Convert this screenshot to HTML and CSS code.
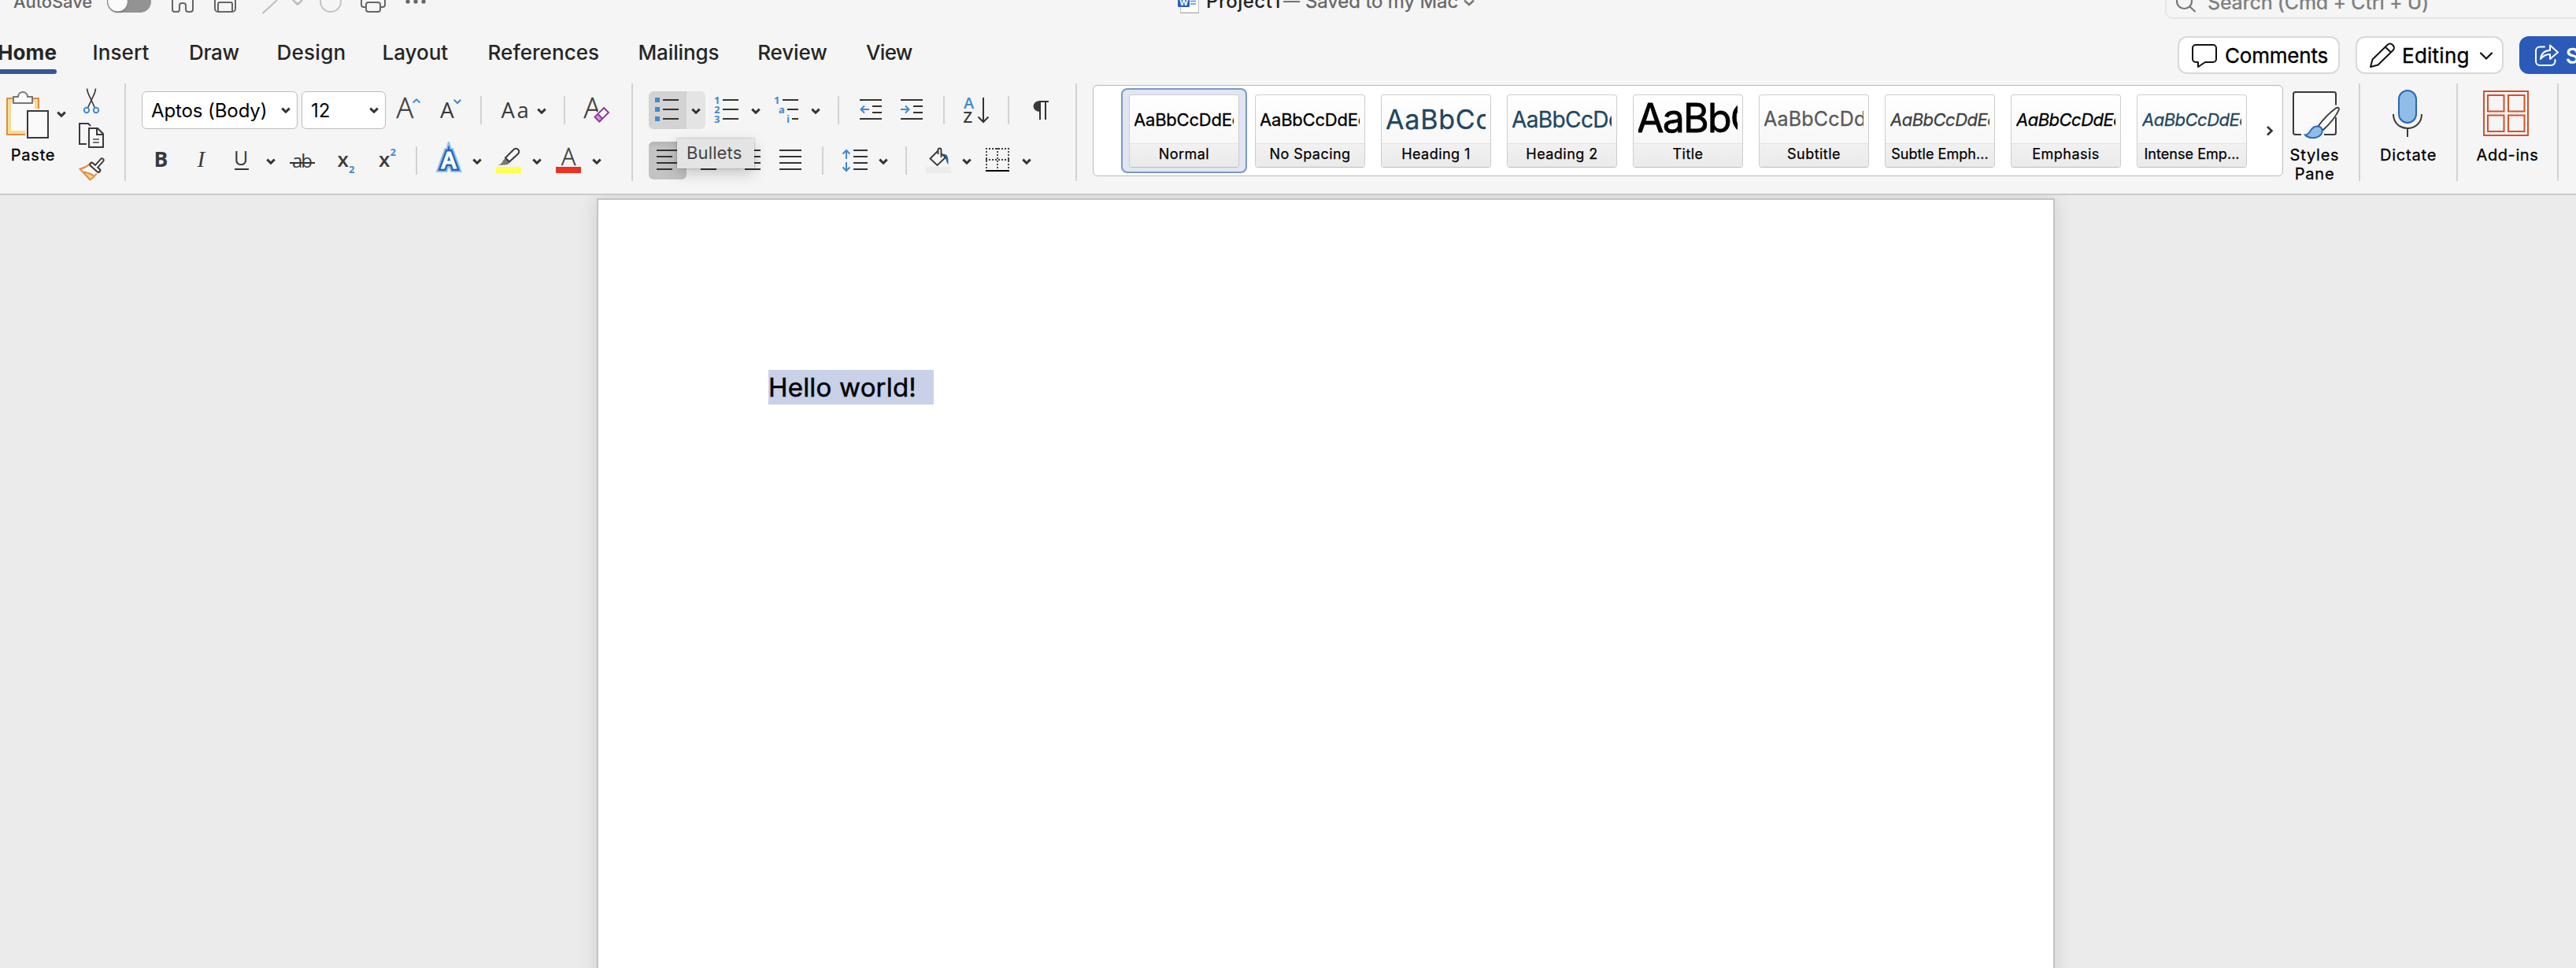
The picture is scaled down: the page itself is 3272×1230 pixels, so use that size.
FILE: index.html
```html
<!DOCTYPE html>
<html lang="en">
<head>
<meta charset="utf-8">
<title>Project1</title>
<link rel="stylesheet" href="styles.css">
</head>
<body>
<svg class="defs" width="0" height="0">
  <symbol id="chev" viewBox="0 0 12 8" width="12" height="8"><path d="M1.300 1.600 6 6.200 10.700 1.600" fill="none" stroke="#333" stroke-width="3"/></symbol>
</svg>

<header class="titlebar">
  <span class="autosave">AutoSave</span>
  <svg class="quick" width="430" height="24" viewBox="120 0 430 24" fill="none" stroke="#666" stroke-width="2">
    <rect x="136" y="-12" width="56" height="28" rx="14" fill="#939393" stroke="none"/>
    <circle cx="149.500" cy="4" r="13" fill="#0002" stroke="none"/>
    <circle cx="149.500" cy="2" r="13" fill="#fbfbfb" stroke="#777" stroke-width="1"/>
    <path d="M219-4V12a3 3 0 0 0 3 3h3a3 3 0 0 0 3-3V7a3 3 0 0 1 3-3h2a3 3 0 0 1 3 3v5a3 3 0 0 0 3 3h3a3 3 0 0 0 3-3V-4"/>
    <path d="M273-4V11a4 4 0 0 0 4 4h18a4 4 0 0 0 4-4V-4M277 15V5a2 2 0 0 1 2-2h14a2 2 0 0 1 2 2v10"/>
    <path d="M333.500 17 352 0" stroke="#bdbdbd"/>
    <path d="M372 0 378 5.500 384 0" stroke="#bdbdbd" stroke-width="2.500"/>
    <circle cx="420" cy="2" r="13" stroke="#c4c4c4"/>
    <path d="M465 9h-3a3 3 0 0 1-3-3V-4M483 9h3a3 3 0 0 0 3-3V-4"/><rect x="465" y="3" width="18" height="12" rx="3"/>
    <g fill="#666" stroke="none"><circle cx="518" cy="2" r="2.600"/><circle cx="528" cy="2" r="2.600"/><circle cx="538" cy="2" r="2.600"/></g>
  </svg>
  <svg class="doc-icon" width="32" height="20" viewBox="1492 0 32 20">
    <path d="M1499.500-4H1522.500V16H1499.500Z" fill="#fff" stroke="#c6c6c6"/><path d="M1499 16.500H1523" stroke="#aaa"/>
    <path d="M1512 1.500h7M1512 5h7" stroke="#4a8ae0" stroke-width="1.500"/>
    <rect x="1496" y="-8" width="15" height="17" rx="1.500" fill="#2c5cbc"/>
    <text x="1498" y="7" font-family="Inter" font-weight="700" font-size="11" fill="#fff">W</text>
  </svg>
  <span class="doc-name">Project1</span><span class="doc-dash">—</span><span class="doc-state">Saved to my Mac</span>
  <svg class="state-chev" width="20" height="12" viewBox="1857 0 20 12"><path d="M1860 .5 1866 6 1872 .5" fill="none" stroke="#777" stroke-width="2.500"/></svg>
  <div class="search">
    <svg width="52" height="24" viewBox="2752 0 52 24" fill="none" stroke="#777" stroke-width="2.200"><circle cx="2774.500" cy="1.500" r="9.500"/><path d="M2781 8 2788.500 15"/></svg>
    <span>Search (Cmd + Ctrl + U)</span>
  </div>
</header>

<nav class="tabs">
  <a class="tab home">Home</a><a class="tab insert">Insert</a><a class="tab draw">Draw</a><a class="tab design">Design</a><a class="tab layout">Layout</a><a class="tab references">References</a><a class="tab mailings">Mailings</a><a class="tab review">Review</a><a class="tab view">View</a>
  <div class="actions">
    <div class="action comments">
      <svg width="58" height="44" viewBox="2768 48 58 44"><path d="M2789 57h22a4 4 0 0 1 4 4v14a4 4 0 0 1-4 4h-10l-9 6v-6h-3a4 4 0 0 1-4-4V61a4 4 0 0 1 4-4Z" fill="none" stroke="#111" stroke-width="2" stroke-linejoin="round"/></svg>
      <span>Comments</span>
    </div>
    <div class="action editing">
      <svg width="57" height="44" viewBox="2994 48 57 44"><path d="M3011 85l2.500-9.500 19-18.500a4.500 4.500 0 0 1 6.500 0l.5.500a4.500 4.500 0 0 1 0 6.500l-19 18.500ZM3030 60l7.500 7" fill="none" stroke="#111" stroke-width="2" stroke-linejoin="round"/></svg>
      <span>Editing</span>
      <svg width="40" height="44" viewBox="3138 48 40 44"><path d="M3151 67.500 3158 74.500 3165 67.500" fill="none" stroke="#111" stroke-width="2.200" stroke-linecap="round"/></svg>
    </div>
    <div class="action share">
      <svg width="59" height="48" viewBox="3200 46 59 48"><path d="M3232 59.500h-6a5 5 0 0 0-5 5V78a5 5 0 0 0 5 5h14.500a5 5 0 0 0 5-5v-2M3227 75c1-7 5-11 12-11v-6.500l10 9-10 8.500v-6c-6 0-9 2-12 6Z" fill="none" stroke="#fff" stroke-width="2" stroke-linejoin="round" stroke-linecap="round"/></svg>
      <span>Share</span>
    </div>
  </div>
</nav>

<section class="ribbon">
  <div class="tool paste">
    <svg width="90" height="78" viewBox="0 106 90 78">
      <path d="M9 125H49V171H9Z" fill="#fafafa" stroke="#e08b40" stroke-width="2"/><path d="M12 128H46V168H12Z" fill="none" stroke="#f5dc94" stroke-width="4"/>
      <path d="M17 131V123h6c0-8 12-8 12 0h6v8Z" fill="#fafafa" stroke="#797673" stroke-width="2"/>
      <rect x="32" y="138" width="32" height="40" fill="#f5f5f5"/><rect x="35" y="141" width="26" height="34" fill="#fafafa" stroke="#3a3a3a" stroke-width="2"/>
      <use href="#chev" x="72" y="141"/>
    </svg>
    <span>Paste</span>
  </div>
  <div class="clipboard">
    <svg width="68" height="124" viewBox="90 106 68 124" fill="none" stroke="#3a3a3a" stroke-width="2">
      <path d="M110.500 112.500Q111 117 113 121L120.500 137M121.500 112.500Q121 117 119 121L111.500 137" stroke-width="1.700"/>
      <circle cx="110" cy="140" r="3.200" stroke="#3f8ad0"/><circle cx="122" cy="140" r="3.200" stroke="#3f8ad0"/>
      <path d="M110 183h-9v-26h11l3 3"/><path d="M113 163h11l7 7v17h-18ZM123 163v8h8" fill="#fafafa"/><path d="M118 177h8M118 181h8" stroke="#797673"/>
      <path d="M101.500 215Q109 213 114 208.500L125.500 219.500Q121 225 115 229Z" fill="#fafafa" stroke="none"/>
      <path d="M105 218Q112 220 119.500 224L114.500 228.500Z" fill="#f5dc94" stroke="none"/>
      <path d="M114 208.500Q109 213 101.700 214.800L114.500 228.500Q119 225.500 123 220.500M105 218.500Q112 219 120 223.500" stroke="#e08b40"/>
      <path d="M122 212 129.500 203.500" stroke-width="6" stroke-linecap="round"/><path d="M116.500 209 125 216.500" stroke-width="6.500" stroke-linecap="round"/>
      <path d="M122 212 129.500 203.500M116.500 209 125 216.500" stroke="#fafafa" stroke-width="2.400" stroke-linecap="round"/>
    </svg>
  </div>
  <i class="rule"></i>

  <div class="group font">
    <div class="row">
      <div class="combo face"><span>Aptos (Body)</span><svg width="12" height="8"><use href="#chev"/></svg></div>
      <div class="combo size"><span>12</span><svg width="12" height="8"><use href="#chev"/></svg></div>
      <svg class="glyph" width="56" height="48" viewBox="490 116 56 48"><text x="503.500" y="150" font-size="36" class="mid">A</text><path class="blue" d="M524.700 130.500 529 126.300 533.300 130.500"/></svg>
      <svg class="glyph" width="64" height="48" viewBox="546 116 64 48"><text x="559" y="150" font-size="28" class="reg">A</text><path class="blue" d="M576.700 126.700 581 131 585.300 126.700"/></svg>
      <i class="sep"></i>
      <svg class="glyph" width="104" height="48" viewBox="612 116 104 48"><text x="636.500" y="150" font-size="27.500" class="reg" letter-spacing="2.500">Aa</text><use href="#chev" x="682" y="137"/></svg>
      <i class="sep"></i>
      <svg class="glyph" width="84" height="48" viewBox="718 116 84 48"><text x="741.500" y="150" font-size="36" class="mid">A</text><path d="M767 134 777 143 761 159 752 149Z" fill="#f5f5f5"/><path d="M756 149 759.500 145.500 765.500 151.500 761.500 155Z" fill="#cf9ad4"/><path d="M767 137 773 143 761.300 154.700 755.500 148.700ZM759.500 145 765.500 151" fill="none" stroke="#8f359c" stroke-width="1.900"/></svg>
    </div>
    <div class="row">
      <svg class="glyph" width="52" height="48" viewBox="180 180 52 48"><text x="195.500" y="212" font-size="26.500" class="bold">B</text></svg>
      <svg class="glyph" width="52" height="48" viewBox="232 180 52 48"><text x="250.500" y="212" font-size="29" class="serif">I</text></svg>
      <svg class="glyph" width="76" height="48" viewBox="284 180 76 48"><text x="297" y="210" font-size="25" class="reg">U</text><path d="M298 215h18" stroke="#333" stroke-width="2"/><use href="#chev" x="338" y="201"/></svg>
      <svg class="glyph" width="52" height="48" viewBox="360 180 52 48"><text x="371" y="213" font-size="24" class="reg" textLength="26">ab</text><path d="M368 207h32" stroke="#333" stroke-width="2"/></svg>
      <svg class="glyph" width="54" height="48" viewBox="412 180 54 48"><text x="428.500" y="212" font-size="26" class="semi">x</text><text x="443" y="220" font-size="13.500" class="digit">2</text></svg>
      <svg class="glyph" width="62" height="48" viewBox="466 180 62 48"><text x="481" y="212" font-size="26" class="semi">x</text><text x="495.500" y="198" font-size="13.500" class="digit">2</text></svg>
      <i class="sep"></i>
      <svg class="glyph" width="90" height="48" viewBox="530 180 90 48"><text x="570" y="213.500" font-size="29" text-anchor="middle" class="fx-glow">A</text><text x="570" y="213.500" font-size="29" text-anchor="middle" class="fx-line">A</text><text x="570" y="213.500" font-size="29" text-anchor="middle" class="fx-fill">A</text><use href="#chev" x="600" y="201"/></svg>
      <svg class="glyph" width="75" height="48" viewBox="620 180 75 48"><path d="M632 210Q637 209 639 204L641.500 201 647.500 206.500 645 209 641 209.500Z" fill="#797673"/><path d="M642 200.500 652.500 190a3.700 3.700 0 0 1 5.500 0 3.700 3.700 0 0 1 0 5.500L647 205.500Z" fill="#fafafa" stroke="#3a3a3a" stroke-width="2"/><path d="M630 212h32v8h-32Z" fill="#ffff54"/><use href="#chev" x="676" y="201"/></svg>
      <svg class="glyph" width="107" height="48" viewBox="695 180 107 48"><text x="713" y="210" font-size="30.500" class="mid">A</text><path d="M706 212h32v8h-32Z" fill="#ea3323"/><use href="#chev" x="752" y="201"/></svg>
    </div>
  </div>
  <i class="rule"></i>

  <div class="group paragraph">
    <div class="row">
      <div class="split"><svg width="72" height="48" viewBox="824 116 72 48"><path d="M832 124h6v6h-6ZM832 136h6v6h-6ZM832 148h6v6h-6Z" fill="#3f8ad0"/><path d="M842 127h20M842 139h20M842 151h20" class="ln"/><use href="#chev" x="878" y="137"/></svg></div>
      <svg width="80" height="48" viewBox="896 116 80 48"><text x="907" y="132" class="digit">1</text><text x="907" y="144" class="digit">2</text><text x="907" y="156" class="digit">3</text><path d="M918 127h20M918 139h20M918 151h20" class="ln"/><use href="#chev" x="954" y="137"/></svg>
      <svg width="88" height="48" viewBox="976 116 88 48"><text x="983" y="132" class="digit">1</text><text x="989" y="144" class="digit">a</text><text x="999" y="156" class="digit">i</text><path d="M994 127h20M1000 139h14M1006 151h8" class="ln"/><use href="#chev" x="1030" y="137"/></svg>
      <i class="sep"></i>
      <svg width="66" height="48" viewBox="1066 116 66 48"><path d="M1092 127h28M1108 135h12M1108 143h12M1092 151h28" class="ln"/><path class="blue" d="M1104 139h-11M1098 134.500 1093.500 139 1098 143.500"/></svg>
      <svg width="66" height="48" viewBox="1132 116 66 48"><path d="M1144 127h28M1160 135h12M1160 143h12M1144 151h28" class="ln"/><path class="blue" d="M1144 139h11M1150 134.500 1154.500 139 1150 143.500"/></svg>
      <i class="sep"></i>
      <svg class="glyph" width="80" height="48" viewBox="1200 116 80 48"><text x="1224" y="138" font-size="20" class="semi sky">A</text><text x="1223.500" y="156" font-size="20" class="semi">Z</text><path d="M1249 124v30M1242.500 148.500 1249 155 1255.500 148.500" class="ln"/></svg>
      <i class="sep"></i>
      <svg width="84" height="48" viewBox="1282 116 84 48"><path d="M1321 128a8.500 7 0 0 0 0 14Z" fill="#3a3a3a"/><path d="M1320 129h12M1321 128v24M1328 128v24" class="ln"/></svg>
    </div>
    <div class="row">
      <div class="pressed"><svg width="48" height="48" viewBox="824 180 48 48"><path d="M834 191h28M834 199h20M834 207h28M834 215h20" class="ln"/></svg></div>
      <svg width="52" height="48" viewBox="872 180 52 48"><path d="M886 191h28M890 199h20M886 207h28M890 215h20" class="ln"/></svg>
      <svg width="52" height="48" viewBox="924 180 52 48"><path d="M938 191h28M946 199h20M938 207h28M946 215h20" class="ln"/></svg>
      <svg width="68" height="48" viewBox="976 180 68 48"><path d="M990 191h28M990 199h28M990 207h28M990 215h28" class="ln"/></svg>
      <i class="sep"></i>
      <svg width="104" height="48" viewBox="1046 180 104 48"><path d="M1084 191h18M1084 199h18M1084 207h18M1084 215h18" class="ln"/><path class="blue" d="M1075 202V191M1070.500 195.500 1075 191 1079.500 195.500M1075 206V217M1070.500 212.500 1075 217 1079.500 212.500"/><use href="#chev" x="1116" y="201"/></svg>
      <i class="sep"></i>
      <svg width="88" height="48" viewBox="1152 180 88 48"><path d="M1176 212h32v8h-32Z" fill="#ececec"/><path d="M1198 195.500c5 0 7 3 6.500 13.500-3-2-2-7-5-9Z" fill="#2b67b5"/><path d="M1191.500 191.500 1181.500 201.500 1190.500 210 1201 200 1195 194.500M1191.500 196v-5.500a2 2 0 0 1 4 0V200" fill="none" stroke="#3a3a3a" stroke-width="1.900"/><use href="#chev" x="1222" y="201"/></svg>
      <svg width="126" height="48" viewBox="1240 180 126 48"><path d="M1252 189h30M1253 188v28M1281 188v28M1252 203h30M1267 188v28" fill="none" stroke="#3a3a3a" stroke-width="1.800" stroke-dasharray="2 2"/><path d="M1252 217h30" stroke="#000" stroke-width="2"/><use href="#chev" x="1298" y="201"/></svg>
    </div>
    <div class="tooltip">Bullets</div>
  </div>
  <i class="rule"></i>

  <div class="gallery">
    <div class="style selected"><div class="card"><div class="sample">AaBbCcDdEe</div><div class="label">Normal</div></div></div>
    <div class="style"><div class="card"><div class="sample">AaBbCcDdEe</div><div class="label">No Spacing</div></div></div>
    <div class="style"><div class="card"><div class="sample h1">AaBbCc</div><div class="label">Heading 1</div></div></div>
    <div class="style"><div class="card"><div class="sample h2">AaBbCcDd</div><div class="label">Heading 2</div></div></div>
    <div class="style"><div class="card"><div class="sample title">AaBbC</div><div class="label">Title</div></div></div>
    <div class="style"><div class="card"><div class="sample subtitle">AaBbCcDd</div><div class="label">Subtitle</div></div></div>
    <div class="style"><div class="card"><div class="sample em subtle">AaBbCcDdEe</div><div class="label tight">Subtle Emph...</div></div></div>
    <div class="style"><div class="card"><div class="sample em">AaBbCcDdEe</div><div class="label">Emphasis</div></div></div>
    <div class="style"><div class="card"><div class="sample em intense">AaBbCcDdEe</div><div class="label tight">Intense Emp...</div></div></div>
    <svg width="35" height="108" viewBox="2864 112 35 108"><path d="M2880 161 2885.500 166.300 2880 171.500" fill="none" stroke="#333" stroke-width="2.600"/></svg>
  </div>

  <div class="tool styles-pane">
    <svg width="80" height="78" viewBox="2900 106 80 78">
      <path d="M2923 171H2915.500a2.500 2.500 0 0 1-2.500-2.500V119.500a2.500 2.500 0 0 1 2.500-2.500H2964.500a2.500 2.500 0 0 1 2.500 2.500V133.500M2967 149V168.500a2.500 2.500 0 0 1-2.500 2.500H2952" fill="#fafafa" stroke="#3a3a3a" stroke-width="2"/>
      <path d="M2944 161Q2955 146 2967 137.500 2971 135.500 2971 139 2966 151 2951 165Z" fill="#fafafa" stroke="#3a3a3a" stroke-width="1.900"/>
      <path d="M2928 171.500c7 0 6-11 15-11 8 0 8 8 4 11.500-5 4.500-15 4-19-.5Z" fill="#90bce8" stroke="#2b67b5" stroke-width="2"/>
    </svg>
    <span>Styles<br>Pane</span>
  </div>
  <i class="rule"></i>
  <div class="tool dictate">
    <svg width="122" height="78" viewBox="2998 106 122 78"><rect x="3047" y="115" width="22" height="41" rx="11" fill="#90bce8" stroke="#2b67b5" stroke-width="2"/><path d="M3040 145c0 24 36 24 36 0M3058 163v11" fill="none" stroke="#3a3a3a" stroke-width="2"/></svg>
    <span>Dictate</span>
  </div>
  <i class="rule"></i>
  <div class="tool addins">
    <svg width="126" height="78" viewBox="3122 106 126 78" fill="none" stroke="#d4502c" stroke-width="2"><rect x="3155" y="116" width="56" height="56"/><path d="M3160 121h20.500v20.500H3160ZM3186 121h20.500v20.500H3186ZM3160 146.500h20.500V167H3160ZM3186 146.500h20.500V167H3186Z"/></svg>
    <span>Add-ins</span>
  </div>
  <i class="rule"></i>
</section>

<main class="canvas">
  <article class="page"><p><mark>Hello world!</mark></p></article>
</main>
</body>
</html>
```
FILE: styles.css
```css
* { box-sizing: border-box; }
body {
  margin: 0;
  width: 3272px;
  height: 1230px;
  overflow: hidden;
  display: flex;
  flex-direction: column;
  background: #f5f5f5;
  font-family: Inter, "Liberation Sans", sans-serif;
  color: #000;
}
svg { display: block; flex: none; overflow: hidden; }
.defs { position: absolute; }

.titlebar { display: flex; height: 26px; overflow: hidden; white-space: nowrap; }
.titlebar > * { flex: none; }
.titlebar > span { line-height: 52px; margin-top: -24px; }
.autosave { width: 103px; margin-left: 17px; font-size: 22px; font-weight: 500; color: #666; letter-spacing: -0.1px; }
.doc-icon { margin-left: 942px; }
.doc-name { width: 98px; margin-left: 8px; font-size: 24px; font-weight: 500; color: #222; letter-spacing: 0.5px; }
.doc-dash { width: 28px; font-size: 21px; color: #666; }
.doc-state { width: 199px; font-size: 24px; color: #666; letter-spacing: -0.1px; -webkit-text-stroke: 0.3px; }
.search {
  display: flex;
  width: 600px;
  height: 48px;
  margin: -24px 0 0 873px;
  border: 2px solid #e6e6e6;
  border-radius: 10px;
  font-size: 25px;
  font-weight: 500;
  line-height: 50px;
  letter-spacing: -0.25px;
  color: #808080;
}
.search svg { margin-top: 22px; }

/* ribbon tabs */
.tabs { display: flex; height: 68px; padding-top: 20px; }
.tab { position: relative; font-size: 26px; font-weight: 500; line-height: 41px; color: #252525; }
.home { width: 120.500px; margin-left: -3px; font-weight: 700; letter-spacing: 0.1px; }
.home::after { content: ""; position: absolute; left: -10px; top: 42px; width: 85px; height: 6px; border-radius: 3px; background: #375695; }
.insert { width: 122.500px; letter-spacing: 0.1px; }
.draw { width: 111.500px; letter-spacing: -0.3px; }
.design { width: 134px; letter-spacing: 0.26px; }
.layout { width: 134px; }
.references { width: 191px; letter-spacing: 0.07px; }
.mailings { width: 151.700px; letter-spacing: -0.13px; }
.review { width: 137.900px; letter-spacing: -0.12px; }
.view { letter-spacing: -0.7px; }
.actions { display: flex; gap: 20px; width: 506px; margin-left: auto; overflow: hidden; }
.action {
  display: flex;
  align-items: center;
  flex: none;
  height: 48px;
  border: 2px solid #d9d9d9;
  border-radius: 12px;
  background: #fff;
  font-size: 26px;
  -webkit-text-stroke: 0.35px;
}
.comments { width: 206px; letter-spacing: -0.2px; }
.editing { width: 188px; letter-spacing: 0.25px; }
.editing span { width: 87px; }
.share { width: 150px; border: 0; background: #2c5ab8; color: #fff; font-weight: 500; }

/* ribbon */
.ribbon { display: flex; height: 154px; padding-top: 12px; border-bottom: 2px solid #cacaca; }
.rule { width: 2px; height: 124px; background: #d2d2d2; flex: none; }
.sep { width: 2px; height: 36px; background: #d2d2d2; flex: none; }
.tool { display: flex; flex-direction: column; flex: none; text-align: center; font-size: 20px; line-height: 26px; letter-spacing: 0.8px; -webkit-text-stroke: 0.3px; }
.paste span { width: 84px; }
.styles-pane { width: 96px; line-height: 24px; letter-spacing: 0.8px; }
.styles-pane span { width: 80px; padding-top: 1px; }
.addins { letter-spacing: 0.6px; }
.group { display: flex; flex-direction: column; gap: 16px; padding: 10px 0 0 20px; position: relative; flex: none; }
.row { display: flex; align-items: center; height: 48px; }
.combo {
  display: flex;
  align-items: center;
  justify-content: space-between;
  height: 48px;
  padding: 0 8px 0 11px;
  border: 1px solid #bcbcbc;
  border-radius: 6px;
  background: #fff;
  font-size: 24px;
}
.face { width: 198px; margin-right: 5px; letter-spacing: -0.1px; }
.size { width: 107px; }

/* icon parts */
.glyph text { font-family: "Open Sans", "Noto Sans", sans-serif; font-weight: 300; fill: #3a3a3a; }
.glyph .mid { stroke: #3a3a3a; stroke-width: 0.4px; }
.glyph .reg { font-weight: 400; }
.glyph .semi { font-weight: 600; }
.glyph .bold { font-weight: 700; }
.glyph .sky { fill: #3f8ad0; }
.glyph .serif { font-family: "Liberation Serif", serif; font-style: italic; font-weight: 400; }
.row .digit { font: 700 13px "Open Sans", "Noto Sans", sans-serif; fill: #3f8ad0; }
.glyph .fx-glow, .glyph .fx-line, .glyph .fx-fill { font-weight: 600; }
.glyph .fx-glow { fill: #93bfec; stroke: #93bfec; stroke-width: 10px; }
.glyph .fx-line { fill: #2664b4; stroke: #2664b4; stroke-width: 6px; }
.glyph .fx-fill { fill: #fff; stroke: #fff; stroke-width: 1px; }
.ln { fill: none; stroke: #333; stroke-width: 2px; }
.blue { fill: none; stroke: #3f8ad0; stroke-width: 2px; }

.split { border-radius: 6px; background: linear-gradient(90deg, #d3d3d3 48px, #e4e4e4 48px); }
.pressed { border-radius: 6px; background: linear-gradient(#b4b4b4, #c3c3c3 8px); }
.tooltip {
  position: absolute;
  left: 56px;
  top: 70px;
  width: 98px;
  height: 38px;
  padding-left: 12px;
  background: #e4e4e4;
  box-shadow: 0 0 2px #0005, 0 6px 18px #0003;
  font-size: 22px;
  line-height: 36px;
  letter-spacing: 0.14px;
  color: #444;
}

/* style gallery */
.gallery {
  display: flex;
  flex: none;
  width: 1512px;
  height: 116px;
  margin: 2px 0 0 20px;
  padding: 3px 0 0 35px;
  border: 1px solid #b9b9b9;
  border-radius: 6px;
  background: #fff;
}
.style { width: 160px; height: 108px; padding: 6px 8px; border: 2px solid transparent; border-radius: 8px; flex: none; }
.selected { border-color: #7c98c6; background: #e1e6f2; }
.card { width: 140px; height: 93px; border: 1px solid #cdcdcd; border-bottom-color: #bdbdbd; border-radius: 4px; overflow: hidden; background: linear-gradient(#fff, #f7f7f7 61px); }
.sample { height: 61px; margin: 0 6px; overflow: hidden; white-space: nowrap; font-size: 22px; line-height: 62px; letter-spacing: -0.2px; text-indent: -1px; -webkit-text-stroke: 0.3px; }
.h1 { font-size: 34px; letter-spacing: 0.8px; color: #1f4662; }
.h2 { font-size: 28px; letter-spacing: -0.6px; color: #1f4662; }
.title { font-size: 50px; line-height: 58px; letter-spacing: -1.800px; text-indent: -2px; -webkit-text-stroke: 0.8px; }
.subtitle { font-size: 25px; line-height: 60px; letter-spacing: 0.2px; color: #595959; }
.em { font-style: italic; letter-spacing: -0.5px; text-indent: 0; }
.subtle { color: #404040; }
.intense { color: #1f4662; }
.label { height: 31px; border-top: 1px solid #e2e2e2; background: linear-gradient(#f1f1f1, #eaeaea); text-align: center; font-size: 18px; line-height: 26px; letter-spacing: 0.45px; white-space: nowrap; -webkit-text-stroke: 0.25px; }
.tight { letter-spacing: 0.05px; }

/* document */
.canvas { flex: 1; display: flex; padding: 4px 0 0 758px; background: #ebebeb; overflow: hidden; }
.page { width: 1852px; height: 1100px; padding: 216px; border: 2px solid #c4c4c4; background: #fff; box-shadow: 0 0 22px #0000001f; }
.page p { margin: 0; font-size: 33px; line-height: 44px; }
.page mark { display: inline-block; width: 210px; height: 44px; line-height: 44px; letter-spacing: 0.2px; -webkit-text-stroke: 0.5px; background: #c8d1e8; color: #000; }
```
